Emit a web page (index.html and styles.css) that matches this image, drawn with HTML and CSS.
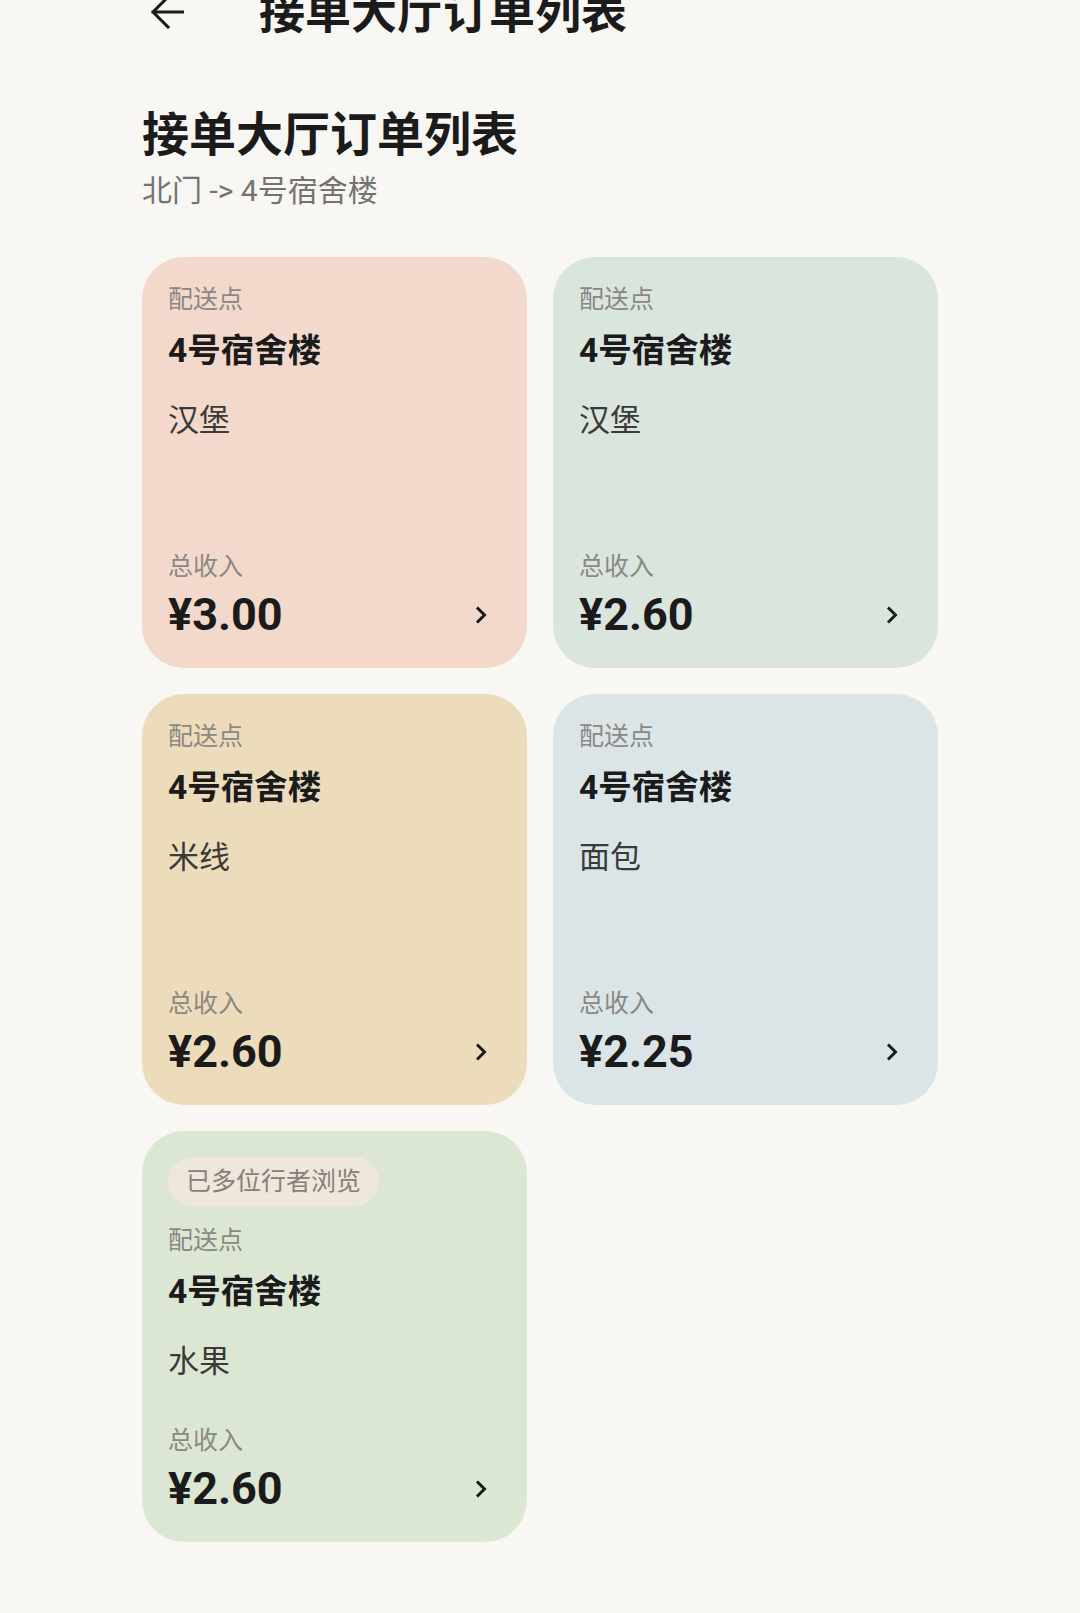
FILE: index.html
```html
<!DOCTYPE html>
<html lang="zh-CN">
<head>
<meta charset="utf-8">
<title>接单大厅订单列表</title>
<link rel="stylesheet" href="styles.css">
</head>
<body>
<header class="topbar">
  <svg class="back" width="34" height="34" viewBox="0 0 34 34" aria-hidden="true">
    <path d="M33 17H3 M18 2L3 17L18 32" fill="none" stroke="#1b1b1b" stroke-width="3" stroke-linecap="square" stroke-linejoin="miter"/>
  </svg>
  <h1 class="topbar-title">接单大厅订单列表</h1>
</header>
<main class="page">
  <h2 class="page-title">接单大厅订单列表</h2>
  <p class="route">北门 -&gt; 4号宿舍楼</p>
  <section class="grid">
    <article class="card card-peach">
      <div class="label">配送点</div>
      <div class="dest">4号宿舍楼</div>
      <div class="item">汉堡</div>
      <div class="bottom">
        <div class="label">总收入</div>
        <div class="price-row"><span class="price">¥3.00</span>
          <svg class="chev" width="16" height="22" viewBox="0 0 16 22" aria-hidden="true"><path d="M4 3.5L11.5 11L4 18.5" fill="none" stroke="#1b1b1b" stroke-width="3"/></svg>
        </div>
      </div>
    </article>
    <article class="card card-mint">
      <div class="label">配送点</div>
      <div class="dest">4号宿舍楼</div>
      <div class="item">汉堡</div>
      <div class="bottom">
        <div class="label">总收入</div>
        <div class="price-row"><span class="price">¥2.60</span>
          <svg class="chev" width="16" height="22" viewBox="0 0 16 22" aria-hidden="true"><path d="M4 3.5L11.5 11L4 18.5" fill="none" stroke="#1b1b1b" stroke-width="3"/></svg>
        </div>
      </div>
    </article>
    <article class="card card-sand">
      <div class="label">配送点</div>
      <div class="dest">4号宿舍楼</div>
      <div class="item">米线</div>
      <div class="bottom">
        <div class="label">总收入</div>
        <div class="price-row"><span class="price">¥2.60</span>
          <svg class="chev" width="16" height="22" viewBox="0 0 16 22" aria-hidden="true"><path d="M4 3.5L11.5 11L4 18.5" fill="none" stroke="#1b1b1b" stroke-width="3"/></svg>
        </div>
      </div>
    </article>
    <article class="card card-sky">
      <div class="label">配送点</div>
      <div class="dest">4号宿舍楼</div>
      <div class="item">面包</div>
      <div class="bottom">
        <div class="label">总收入</div>
        <div class="price-row"><span class="price">¥2.25</span>
          <svg class="chev" width="16" height="22" viewBox="0 0 16 22" aria-hidden="true"><path d="M4 3.5L11.5 11L4 18.5" fill="none" stroke="#1b1b1b" stroke-width="3"/></svg>
        </div>
      </div>
    </article>
    <article class="card card-sage">
      <div class="badge">已多位行者浏览</div>
      <div class="label">配送点</div>
      <div class="dest">4号宿舍楼</div>
      <div class="item">水果</div>
      <div class="bottom">
        <div class="label">总收入</div>
        <div class="price-row"><span class="price">¥2.60</span>
          <svg class="chev" width="16" height="22" viewBox="0 0 16 22" aria-hidden="true"><path d="M4 3.5L11.5 11L4 18.5" fill="none" stroke="#1b1b1b" stroke-width="3"/></svg>
        </div>
      </div>
    </article>
  </section>
</main>
</body>
</html>
```

FILE: styles.css
```css
* { box-sizing: border-box; }

html, body {
  margin: 0;
  padding: 0;
  background: #f8f7f3;
}

body {
  font-family: Roboto, "Noto Sans CJK SC", sans-serif;
  color: #1b1b1b;
  width: 1080px;
  height: 1613px;
  overflow: hidden;
}

.topbar {
  display: flex;
  align-items: center;
  height: 56px;
  margin-top: -16px;
  padding-left: 150px;
}

.back {
  flex: none;
  display: block;
}

.topbar-title {
  margin: 0 0 0 75px;
  font-size: 46px;
  line-height: 56px;
  font-weight: 700;
  letter-spacing: 0;
}

.page {
  padding: 0 142px;
}

.page-title {
  margin: 65px 0 0;
  font-size: 47px;
  line-height: 60px;
  font-weight: 700;
}

.route {
  margin: 8px 0 0;
  font-size: 30px;
  line-height: 36px;
  color: #747370;
}

.grid {
  margin-top: 48px;
  display: grid;
  grid-template-columns: 1fr 1fr;
  gap: 26px;
}

.card {
  height: 411px;
  border-radius: 42px;
  padding: 26px 26px 25px;
  display: flex;
  flex-direction: column;
}

.card-peach { background: #f3d9cc; }
.card-mint  { background: #dae5de; }
.card-sand  { background: #ecdcbc; }
.card-sky   { background: #dbe5e8; }
.card-sage  { background: #dce7d3; }

.badge {
  align-self: flex-start;
  height: 49px;
  line-height: 49px;
  padding: 0 18px;
  border-radius: 25px;
  background: #efe6dc;
  color: #858079;
  font-size: 25px;
  margin-bottom: 18px;
}

.label {
  font-size: 25px;
  line-height: 34px;
  color: #8b8883;
}

.dest {
  margin-top: 12px;
  font-size: 33.5px;
  line-height: 44px;
  font-weight: 700;
  color: #1b1b1b;
}

.item {
  margin-top: 26px;
  font-size: 31px;
  line-height: 44px;
  color: #3a3a38;
}

.bottom {
  margin-top: auto;
}

.bottom .label {
  margin-bottom: 3px;
}

.price-row {
  display: flex;
  align-items: center;
  justify-content: space-between;
  height: 56px;
  padding-right: 12px;
}

.price {
  font-size: 45px;
  line-height: 56px;
  font-weight: 700;
  color: #1b1b1b;
}

.chev {
  display: block;
  flex: none;
}
```
